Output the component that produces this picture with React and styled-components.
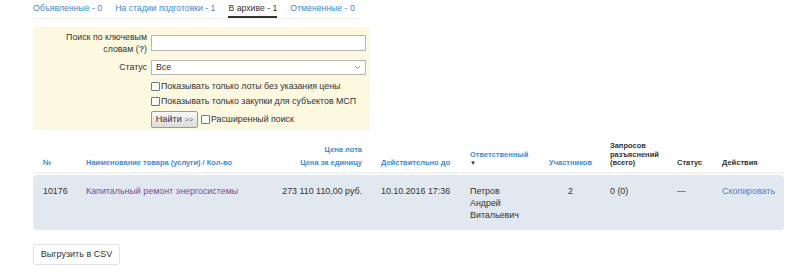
import React from "react";
import styled, { createGlobalStyle } from "styled-components";

const GlobalStyle = createGlobalStyle`
  body {
    margin: 0;
    background: #fff;
    font-family: "Liberation Sans", Arial, sans-serif;
    font-size: 9px;
    color: #333;
  }
`;

const Page = styled.div`
  padding: 0 16px 0 33px;
`;

const Tabs = styled.nav`
  display: flex;
  width: 326px;
  border-bottom: 1px solid #eee;
  margin-bottom: 8px;
`;

const Tab = styled.a`
  color: ${props => (props.active ? "#333" : "#3d8ac9")};
  font-size: 8.7px;
  line-height: 14px;
  padding: 1px 0 1px;
  margin-right: 13px;
  border-bottom: 2px solid ${props => (props.active ? "#333" : "transparent")};
  text-decoration: none;
  white-space: nowrap;
`;

const SearchBox = styled.form`
  background: #fdf8e0;
  width: 337px;
  padding: 3px 0 1px;
  display: grid;
  grid-template-columns: 114px 1fr;
  grid-template-rows: 25px 24px 14px 16px 20px;
  column-gap: 4px;
  align-items: center;
`;

const Label = styled.label`
  text-align: right;
  font-size: 8.8px;
  line-height: 12px;
  color: #333;
`;

const Help = styled.span`
  color: #2a6ebb;
  font-weight: bold;
`;

const Field = styled.div`
  display: flex;
  align-items: center;
  gap: 1px;
`;

const TextInput = styled.input`
  box-sizing: border-box;
  width: 215px;
  height: 16px;
  border: 1px solid #b5b5b5;
  padding: 0 3px;
  background: #fff;
`;

const Select = styled.div`
  box-sizing: border-box;
  width: 215px;
  height: 15px;
  border: 1px solid #b5b5b5;
  background: #fff;
  display: flex;
  align-items: center;
  justify-content: space-between;
  padding: 0 4px;
  font-size: 8.8px;
`;

const Check = styled.span`
  display: inline-block;
  box-sizing: border-box;
  width: 9px;
  height: 9px;
  border: 1px solid #777;
  background: #fff;
  border-radius: 1px;
  flex: none;
`;

const CheckLabel = styled.span`
  font-size: 8.8px;
  color: #333;
  white-space: nowrap;
`;

const FindButton = styled.button`
  font-family: inherit;
  font-size: 9.2px;
  height: 17px;
  width: 47px;
  padding: 0;
  border: 1px solid #9a9a9a;
  border-radius: 2px;
  background: linear-gradient(#f7f7f7, #dcdcdc);
  color: #333;
  margin-right: 2px;
  span {
    color: #666;
    font-size: 7.5px;
  }
`;

const Table = styled.table`
  width: 751px;
  table-layout: fixed;
  border-collapse: separate;
  border-spacing: 0;
  margin-top: 12px;
`;

const Th = styled.th`
  font-size: 7.5px;
  font-weight: bold;
  line-height: 8.5px;
  color: ${props => (props.link ? "#3d8ccd" : "#333")};
  text-align: ${props => props.align || "left"};
  vertical-align: bottom;
  padding: 0 ${props => props.pr || 0}px 4px ${props => props.pl || 0}px;
  border-bottom: 2px solid #f3f3f3;
  width: ${props => props.w}px;
  box-sizing: border-box;
`;

const PriceTop = styled.div`
  margin-bottom: 4.5px;
`;

const SortArrow = styled.div`
  font-size: 6px;
  line-height: 8.5px;
  color: #333;
`;

const Row = styled.tr`
  background: #e2e8ef;
  td:first-child {
    border-radius: 4px 0 0 4px;
  }
  td:last-child {
    border-radius: 0 4px 4px 0;
  }
`;

const Td = styled.td`
  font-size: 8.9px;
  line-height: 12px;
  color: ${props => props.color || "#333"};
  text-align: ${props => props.align || "left"};
  vertical-align: top;
  padding: 10px ${props => props.pr || 0}px 9px ${props => props.pl || 0}px;
  white-space: nowrap;
`;

const Spacer = styled.tr`
  height: 1px;
`;

const CsvButton = styled.button`
  display: block;
  margin-top: 14px;
  font-family: inherit;
  font-size: 9px;
  height: 21px;
  width: 87px;
  padding: 0;
  background: #fff;
  border: 1px solid #e2e2e2;
  border-radius: 3px;
  color: #333;
`;

export default function App() {
  return (
    <Page>
      <GlobalStyle />
      <Tabs>
        <Tab>Объявленные - 0</Tab>
        <Tab>На стадии подготовки - 1</Tab>
        <Tab active>В архиве - 1</Tab>
        <Tab>Отмененные - 0</Tab>
      </Tabs>

      <SearchBox>
        <Label>
          Поиск по ключевым
          <br />
          словам (<Help>?</Help>)
        </Label>
        <Field>
          <TextInput />
        </Field>
        <Label>Статус</Label>
        <Field>
          <Select>
            <span>Все</span>
            <svg width="7" height="5" viewBox="0 0 7 5">
              <path d="M1 1l2.5 2.5L6 1" fill="none" stroke="#999" strokeWidth="1" />
            </svg>
          </Select>
        </Field>
        <span />
        <Field>
          <Check />
          <CheckLabel>Показывать только лоты без указания цены</CheckLabel>
        </Field>
        <span />
        <Field>
          <Check />
          <CheckLabel>Показывать только закупки для субъектов МСП</CheckLabel>
        </Field>
        <span />
        <Field>
          <FindButton type="button">
            Найти <span>&gt;&gt;</span>
          </FindButton>
          <Check />
          <CheckLabel>Расширенный поиск</CheckLabel>
        </Field>
      </SearchBox>

      <Table>
        <thead>
          <tr>
            <Th link pl={10} w={53}>№</Th>
            <Th link w={164}>Наименование товара (услуги) / Кол-во</Th>
            <Th link align="right" pr={19} w={131}>
              <PriceTop>Цена лота</PriceTop>
              Цена за единицу
            </Th>
            <Th link w={89}>Действительно до</Th>
            <Th link w={78}>
              Ответственный
              <SortArrow>▼</SortArrow>
            </Th>
            <Th link align="center" pr={17} w={62}>Участников</Th>
            <Th w={67}>
              Запросов
              <br />
              разъяснений
              <br />
              (всего)
            </Th>
            <Th w={45}>Статус</Th>
            <Th w={62}>Действия</Th>
          </tr>
        </thead>
        <tbody>
          <Spacer />
          <Row>
            <Td pl={10}>10176</Td>
            <Td color="#7a4b9b">Капитальный ремонт энергосистемы</Td>
            <Td align="right" pr={19}>273 110 110,00 руб.</Td>
            <Td>10.10.2016 17:36</Td>
            <Td>
              Петров
              <br />
              Андрей
              <br />
              Витальевич
            </Td>
            <Td align="center" pr={17}>2</Td>
            <Td>0 (0)</Td>
            <Td>—</Td>
            <Td color="#4b7fd1">Скопировать</Td>
          </Row>
        </tbody>
      </Table>

      <CsvButton type="button">Выгрузить в CSV</CsvButton>
    </Page>
  );
}
